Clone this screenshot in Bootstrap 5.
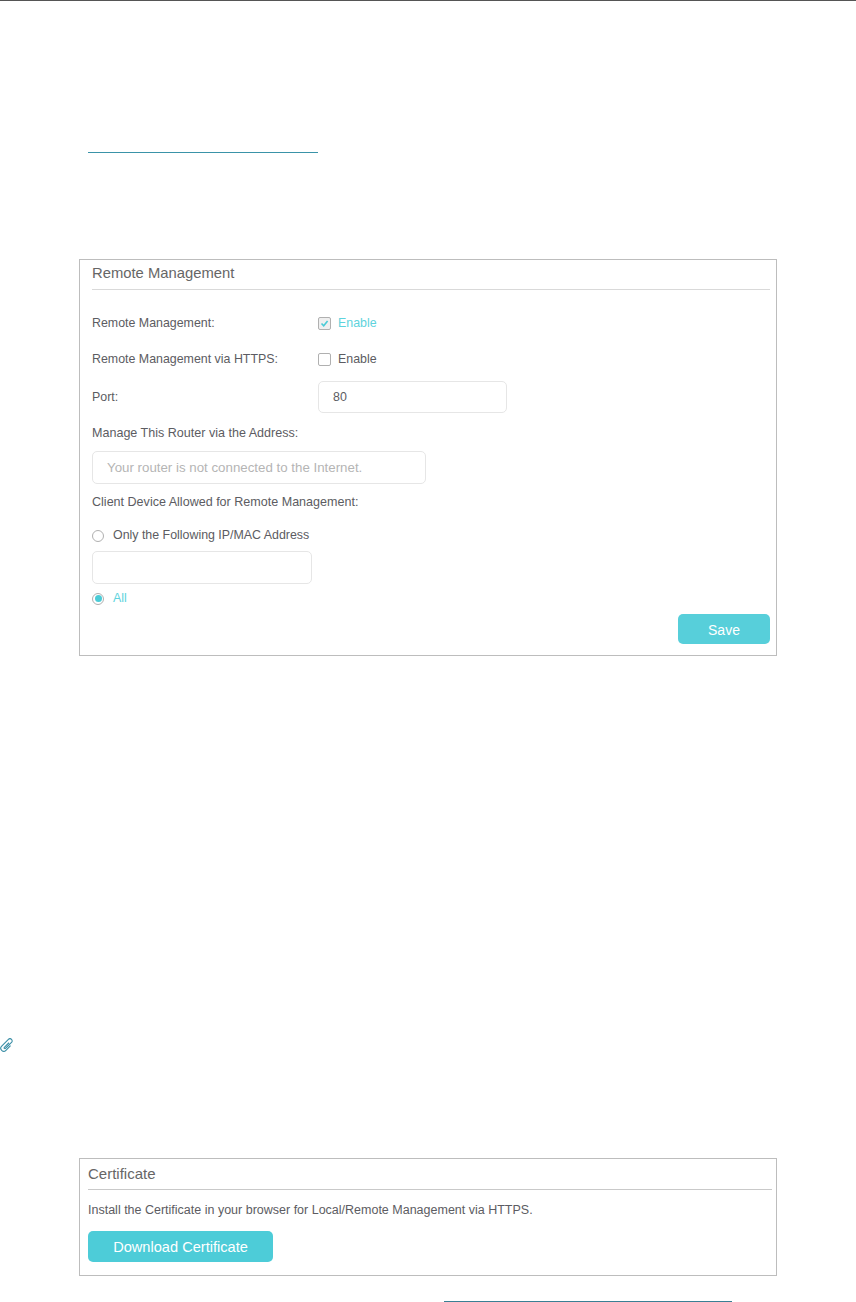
<!DOCTYPE html>
<html lang="en">
<head>
  <meta charset="UTF-8" />
  <meta name="viewport" content="width=device-width, initial-scale=1.0" />
  <title>Remote Management</title>
  <link href="https://cdn.jsdelivr.net/npm/bootstrap@5.3.0/dist/css/bootstrap.min.css" rel="stylesheet">
  <style>
    body { font-family: "Liberation Sans", Arial, sans-serif; font-size: 12.4px; color: #5c5c62; background: #fff; height: 1302px; overflow: hidden; }
    .top-line { height: 1px; background: #555; }
    .blank-link { width: 230px; height: 1px; background: #3a93a8; margin: 151px 0 0 88px; }
    .panel-box { border: 1px solid #bdbdbd; margin-left: 79px; width: 698px; }
    .panel-one { margin-top: 106px; height: 397px; padding: 0 6px 0 12px; }
    .panel-title { font-size: 14.8px; line-height: 27px; height: 30px; border-bottom: 1px solid #d9d9d9; color: #666; }
    .form-line { display: flex; align-items: center; }
    .field-name { width: 226px; }
    .line-first { height: 34px; margin-top: 16px; }
    .line-https { height: 39px; }
    .line-port { height: 36px; }
    .line-head { height: 36px; padding-top: 1px; font-size: 12.55px; }
    .line-only { height: 31px; }
    .line-all { height: 29px; }
    .tick-box { width: 13px; height: 13px; border: 1px solid #b0b0b0; border-radius: 2px; margin-right: 7px; display: flex; align-items: center; justify-content: center; }
    .tick-box.is-on { background: #efefef; }
    .dot-box { width: 12px; height: 12px; border: 1px solid #b0b0b0; border-radius: 50%; margin-right: 9px; display: flex; align-items: center; justify-content: center; }
    .dot-box span { width: 7px; height: 7px; border-radius: 50%; background: #4acbd6; }
    .on-text { color: #5ed3dd; }
    .plain-input { border: 1px solid #e6e6e6; border-radius: 5px; height: 33px; padding: 0 14px; display: flex; align-items: center; }
    .input-port { width: 189px; height: 32px; }
    .input-address { width: 334px; color: #b5b5b5; font-size: 13.3px; }
    .input-ip { width: 220px; }
    .btn-teal { background: #57cfda; color: #fff; border: 0; border-radius: 5px; font-size: 14px; padding: 2px 0 0; }
    .btn-save { width: 92px; height: 30px; margin-top: 1px; }
    .btn-cert { width: 185px; height: 31px; background: #4dccd8; font-size: 14.6px; }
    .clip-icon { margin: 382px 0 0 0; height: 15px; }
    .panel-two { margin-top: 105px; height: 118px; padding: 0 4px 0 8px; font-size: 12.5px; }
    .panel-two .panel-title { font-size: 15px; height: 31px; line-height: 29px; border-bottom-color: #c9c9c9; }
    .line-install { height: 41px; }
    .tail-link { width: 288px; height: 1px; background: #3a7f94; margin: 25px 0 0 444px; }
  </style>
</head>
<body>
  <div class="top-line"></div>
  <div class="blank-link"></div>

  <div class="panel-box panel-one">
    <div class="panel-title">Remote Management</div>
    <div class="form-line line-first">
      <span class="field-name">Remote Management:</span>
      <span class="tick-box is-on">
        <svg width="9" height="9" viewBox="0 0 9 9"><path d="M1.500 4.500 3.700 6.800 7.600 2" fill="none" stroke="#4acbd6" stroke-width="1.600"/></svg>
      </span>
      <span class="on-text">Enable</span>
    </div>
    <div class="form-line line-https">
      <span class="field-name">Remote Management via HTTPS:</span>
      <span class="tick-box"></span>
      <span>Enable</span>
    </div>
    <div class="form-line line-port">
      <span class="field-name">Port:</span>
      <div class="plain-input input-port">80</div>
    </div>
    <div class="form-line line-head">Manage This Router via the Address:</div>
    <div class="plain-input input-address">Your router is not connected to the Internet.</div>
    <div class="form-line line-head">Client Device Allowed for Remote Management:</div>
    <div class="form-line line-only">
      <span class="dot-box"></span>
      <span>Only the Following IP/MAC Address</span>
    </div>
    <div class="plain-input input-ip"></div>
    <div class="form-line line-all">
      <span class="dot-box"><span></span></span>
      <span class="on-text">All</span>
    </div>
    <div class="d-flex justify-content-end">
      <button class="btn-teal btn-save" type="button">Save</button>
    </div>
  </div>

  <div class="clip-icon">
    <svg width="15" height="15" viewBox="0 0 15 15" class="d-block"><g transform="translate(7 7) rotate(-45)"><path d="M2 3H-4.500a3 3 0 0 1 0-6H5a2.200 2.200 0 0 1 0 4.400H-3.500a.8.8 0 0 1 0-1.600H3" fill="none" stroke="#3a8ea6" stroke-width="1.100"/></g></svg>
  </div>

  <div class="panel-box panel-two">
    <div class="panel-title">Certificate</div>
    <div class="form-line line-install">Install the Certificate in your browser for Local/Remote Management via HTTPS.</div>
    <button class="btn-teal btn-cert" type="button">Download Certificate</button>
  </div>
  <div class="tail-link"></div>

  <script src="https://cdn.jsdelivr.net/npm/bootstrap@5.3.0/dist/js/bootstrap.bundle.min.js"></script>
</body>
</html>
